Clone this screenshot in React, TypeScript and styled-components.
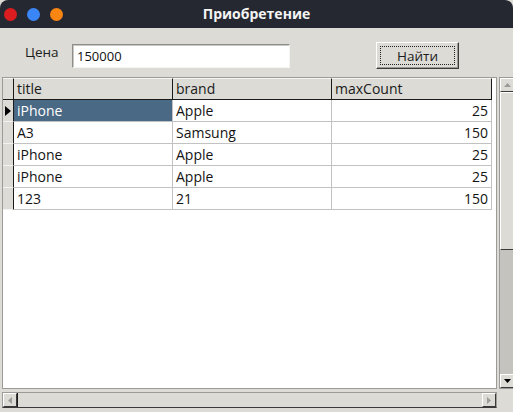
import React from "react";
import styled, { createGlobalStyle } from "styled-components";

const Global = createGlobalStyle`
  html, body { margin: 0; padding: 0; background: #dcdbd6; }
  body { font-family: "Open Sans", "DejaVu Sans", sans-serif; }
`;

const Window = styled.div`
  width: 513px;
  height: 412px;
  display: flex;
  flex-direction: column;
  background: #dcdbd6;
  overflow: hidden;
`;

const TitleBar = styled.div`
  height: 28px;
  background: #252831;
  border-radius: 8px 8px 0 0;
  display: flex;
  align-items: center;
  position: relative;
  padding-left: 4px;
  gap: 10px;
`;

const Light = styled.span<{ $c: string }>`
  width: 13px;
  height: 13px;
  border-radius: 50%;
  background: ${(p) => p.$c};
`;

const Title = styled.div`
  position: absolute;
  left: 0;
  right: 0;
  top: 0;
  height: 28px;
  line-height: 28px;
  text-align: center;
  color: #f4f4f4;
  font-weight: bold;
  font-size: 14px;
  pointer-events: none;
`;

const SearchRow = styled.div`
  display: flex;
  align-items: flex-start;
  height: 35px;
  padding-top: 14px;
  padding-left: 25px;
`;

const Label = styled.span`
  font-size: 13.5px;
  line-height: 18px;
  color: #1c1c1c;
  width: 47px;
  margin-top: 1px;
`;

const Input = styled.div`
  width: 212px;
  height: 22px;
  margin-top: 2px;
  background: #fff;
  border-top: 1px solid #8e8d89;
  border-left: 1px solid #8e8d89;
  border-right: 1px solid #f4f4f2;
  border-bottom: 1px solid #f4f4f2;
  box-shadow: inset 1px 1px 0 #c8c7c2;
  font-size: 13px;
  line-height: 23px;
  padding-left: 4px;
  color: #111;
`;

const Button = styled.div`
  margin-left: 86px;
  width: 83px;
  height: 27px;
  box-sizing: border-box;
  border-top: 1px solid #fff;
  border-left: 1px solid #fff;
  border-right: 1px solid #3a3a3a;
  border-bottom: 1px solid #3a3a3a;
  box-shadow: inset -1px -1px 0 #9a9994;
  display: flex;
  align-items: center;
  justify-content: center;
  position: relative;
  font-size: 13.5px;
  color: #1c1c1c;
  &::after {
    content: "";
    position: absolute;
    inset: 3px;
    border: 1px dotted #222;
  }
`;

const Body = styled.div`
  display: grid;
  grid-template-columns: 495px 16px;
  grid-template-rows: 312px 16px;
  column-gap: 2px;
  row-gap: 3px;
  padding-left: 2px;
`;

const Table = styled.div`
  background: #fff;
  border: 1px solid #9c9b97;
  display: flex;
  flex-direction: column;
  overflow: hidden;
`;

const Row = styled.div`
  display: grid;
  grid-template-columns: 11px 159px 159px 160px;
  height: 22px;
`;

const HeadCell = styled.div`
  background: #dcdbd6;
  border-top: 1px solid #f6f6f4;
  border-bottom: 1px solid #1a1a1a;
  border-right: 1px solid #1a1a1a;
  font-size: 14px;
  line-height: 20px;
  padding-left: 3px;
  color: #1a1a1a;
  box-sizing: border-box;
`;

const Indicator = styled.div`
  background: #dcdbd6;
  border-right: 1px solid #1a1a1a;
  border-bottom: 1px solid #f3f3f1;
  box-sizing: border-box;
  display: flex;
  align-items: center;
  padding-left: 2px;
`;

const Arrow = styled.span`
  width: 0;
  height: 0;
  border-top: 5px solid transparent;
  border-bottom: 5px solid transparent;
  border-left: 6px solid #000;
`;

const Cell = styled.div<{ $sel?: boolean; $num?: boolean }>`
  background: ${(p) => (p.$sel ? "#4a6984" : "#fff")};
  color: ${(p) => (p.$sel ? "#fff" : "#141414")};
  border-right: 1px solid #c2c2c2;
  border-bottom: 1px solid #c2c2c2;
  box-sizing: border-box;
  font-size: 14px;
  line-height: 21px;
  padding: 0 3px 0 3px;
  text-align: ${(p) => (p.$num ? "right" : "left")};
  white-space: nowrap;
`;

const VScroll = styled.div`
  background: #c4c3be;
  border: 1px solid #9c9b97;
  display: flex;
  flex-direction: column;
`;

const HScroll = styled.div`
  background: #dcdbd6;
  border: 1px solid #9c9b97;
  border-bottom-color: #3a3a3a;
  display: flex;
`;

const ScrollBtn = styled.div<{ $dim?: boolean }>`
  width: 14px;
  height: 14px;
  flex: none;
  background: #dcdbd6;
  border-top: 1px solid #fff;
  border-left: 1px solid #fff;
  border-right: 1px solid #3a3a3a;
  border-bottom: 1px solid #3a3a3a;
  box-sizing: border-box;
  display: flex;
  align-items: center;
  justify-content: center;
  color: ${(p) => (p.$dim ? "#9c9b97" : "#000")};
`;

const Thumb = styled.div`
  height: 158px;
  background: #dcdbd6;
  border-top: 1px solid #fff;
  border-left: 1px solid #fff;
  border-right: 1px solid #3a3a3a;
  border-bottom: 1px solid #3a3a3a;
  box-sizing: border-box;
`;

const HThumb = styled.div`
  flex: 1;
  background: #dcdbd6;
  border-left: 1px solid #1a1a1a;
`;

const Spacer = styled.div`
  flex: 1;
`;

const Tri = ({ dir }: { dir: "up" | "down" | "left" | "right" }) => {
  const pts = {
    up: "0,4 3.5,0 7,4",
    down: "0,0 3.5,4 7,0",
    left: "4,0 0,3.5 4,7",
    right: "0,0 4,3.5 0,7",
  }[dir];
  const vert = dir === "up" || dir === "down";
  return (
    <svg width={vert ? 7 : 4} height={vert ? 4 : 7} viewBox={vert ? "0 0 7 4" : "0 0 4 7"}>
      <polygon points={pts} fill="currentColor" />
    </svg>
  );
};

const rows = [
  ["iPhone", "Apple", "25"],
  ["A3", "Samsung", "150"],
  ["iPhone", "Apple", "25"],
  ["iPhone", "Apple", "25"],
  ["123", "21", "150"],
];

export default function App() {
  return (
    <Window>
      <Global />
      <TitleBar>
        <Light $c="#db1d1f" />
        <Light $c="#3b86f7" />
        <Light $c="#f98512" />
        <Title>Приобретение</Title>
      </TitleBar>
      <SearchRow>
        <Label>Цена</Label>
        <Input>150000</Input>
        <Button>Найти</Button>
      </SearchRow>
      <Body>
        <Table>
          <Row>
            <HeadCell />
            <HeadCell>title</HeadCell>
            <HeadCell>brand</HeadCell>
            <HeadCell>maxCount</HeadCell>
          </Row>
          {rows.map((r, i) => (
            <Row key={i}>
              <Indicator>{i === 0 && <Arrow />}</Indicator>
              <Cell $sel={i === 0}>{r[0]}</Cell>
              <Cell>{r[1]}</Cell>
              <Cell $num>{r[2]}</Cell>
            </Row>
          ))}
        </Table>
        <VScroll>
          <ScrollBtn $dim>
            <Tri dir="up" />
          </ScrollBtn>
          <Thumb />
          <Spacer />
          <ScrollBtn>
            <Tri dir="down" />
          </ScrollBtn>
        </VScroll>
        <HScroll>
          <ScrollBtn $dim>
            <Tri dir="left" />
          </ScrollBtn>
          <HThumb />
          <ScrollBtn $dim>
            <Tri dir="right" />
          </ScrollBtn>
        </HScroll>
      </Body>
    </Window>
  );
}
